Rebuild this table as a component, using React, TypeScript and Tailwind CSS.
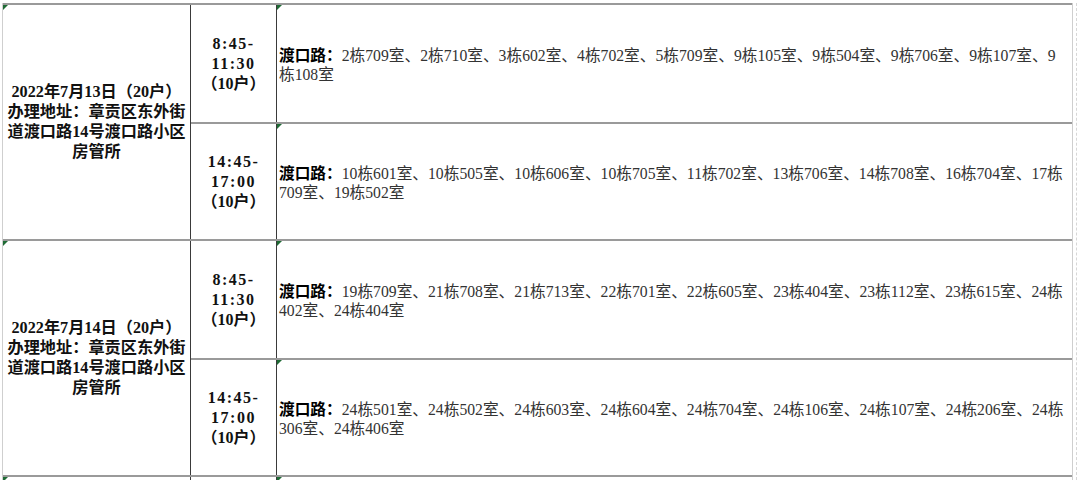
const FONT = { fontFamily: '"Liberation Serif", "Noto Sans CJK SC", serif' };

type Slot = { time: string[]; lines: string[] };
type Group = { date: string; slots: Slot[] };

const GROUPS: Group[] = [
  {
    date: "2022年7月13日（20户）",
    slots: [
      {
        time: ["8:45-", "11:30", "（10户）"],
        lines: [
          "2栋709室、2栋710室、3栋602室、4栋702室、5栋709室、9栋105室、9栋504室、9栋706室、9栋107室、9",
          "栋108室",
        ],
      },
      {
        time: ["14:45-", "17:00", "（10户）"],
        lines: [
          "10栋601室、10栋505室、10栋606室、10栋705室、11栋702室、13栋706室、14栋708室、16栋704室、17栋",
          "709室、19栋502室",
        ],
      },
    ],
  },
  {
    date: "2022年7月14日（20户）",
    slots: [
      {
        time: ["8:45-", "11:30", "（10户）"],
        lines: [
          "19栋709室、21栋708室、21栋713室、22栋701室、22栋605室、23栋404室、23栋112室、23栋615室、24栋",
          "402室、24栋404室",
        ],
      },
      {
        time: ["14:45-", "17:00", "（10户）"],
        lines: [
          "24栋501室、24栋502室、24栋603室、24栋604室、24栋704室、24栋106室、24栋107室、24栋206室、24栋",
          "306室、24栋406室",
        ],
      },
    ],
  },
];

function Marker() {
  return (
    <div className="absolute left-0 top-0 w-0 h-0 border-t-[5px] border-r-[5px] border-t-[#1f6b35] border-r-transparent" />
  );
}

function SlotRow({ slot, first }: { slot: Slot; first: boolean }) {
  return (
    <div className={`flex h-[117px] ${first ? "" : "border-t-2 border-[#9a9a9a]"}`}>
      <div className="w-[86px] shrink-0 border-r border-[#3a3a3a] flex flex-col items-center justify-center font-bold text-[16px] leading-[20px] text-[#111] tracking-[1.5px]">
        {slot.time.map((t, i) => (
          <div key={i} className={i === 2 ? "tracking-normal" : ""}>
            {t}
          </div>
        ))}
      </div>
      <div className="relative flex-1 flex flex-col justify-center pl-[2px] pt-[3px] text-[15.7px] leading-[19px] text-[#333] whitespace-nowrap">
        <Marker />
        {slot.lines.map((l, i) => (
          <div key={i}>
            {i === 0 && <span className="font-bold text-[#000]">渡口路：</span>}
            {l}
          </div>
        ))}
      </div>
    </div>
  );
}

function GroupRow({ group }: { group: Group }) {
  return (
    <div className="flex border-t-2 border-[#9a9a9a]">
      <div className="relative w-[188px] shrink-0 border-r border-[#3a3a3a] flex items-center justify-center text-center px-[3px] font-bold text-[16.2px] leading-[20px] text-[#111]">
        <Marker />
        <div>
          <div className="whitespace-nowrap">{group.date}</div>
          <div>办理地址：章贡区东外街道渡口路14号渡口路小区房管所</div>
        </div>
      </div>
      <div className="flex-1 flex flex-col">
        {group.slots.map((s, i) => (
          <SlotRow key={i} slot={s} first={i === 0} />
        ))}
      </div>
    </div>
  );
}

export default function App() {
  return (
    <div className="w-[1080px] h-[480px] overflow-hidden bg-white pt-[3px] pl-[2px]" style={FONT}>
      <div className="flex">
        <div className="w-[1071px] border-l border-r border-[#cfcfcf]">
          {GROUPS.map((g, i) => (
            <GroupRow key={i} group={g} />
          ))}
          <div className="flex border-t-2 border-[#9a9a9a] h-[20px]">
            <div className="relative w-[188px] shrink-0 border-r border-[#3a3a3a]">
              <Marker />
            </div>
            <div className="w-[86px] shrink-0 border-r border-[#3a3a3a]" />
            <div className="relative flex-1">
              <Marker />
            </div>
          </div>
        </div>
        <div className="ml-[3px] w-0 border-l border-dashed border-[#d6d6d6]" />
      </div>
    </div>
  );
}
